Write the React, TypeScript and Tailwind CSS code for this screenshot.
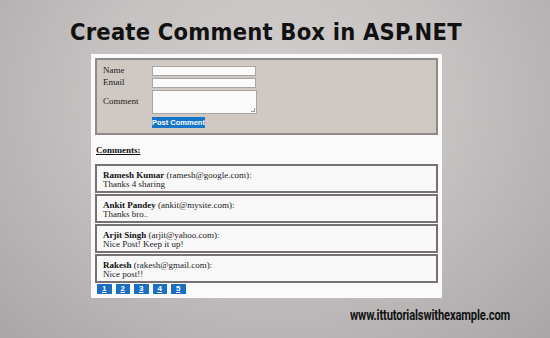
import React from "react";

const comments = [
  { name: "Ramesh Kumar", email: "ramesh@google.com", text: "Thanks 4 sharing" },
  { name: "Ankit Pandey", email: "ankit@mysite.com", text: "Thanks bro.." },
  { name: "Arjit Singh", email: "arjit@yahoo.com", text: "Nice Post! Keep it up!" },
  { name: "Rakesh", email: "rakesh@gmail.com", text: "Nice post!!" },
];

const pages = ["1", "2", "3", "4", "5"];

const App = () => {
  return (
    <div className="w-[550px] h-[338px] overflow-hidden bg-[radial-gradient(ellipse_at_50%_30%,#d2cecd_0%,#c6c2c2_45%,#a9a6a7_100%)]">
      {/* Title */}
      <div className="pl-[70px] pt-[17px] h-[54px]">
        <h1 className="font-['DejaVu_Sans_Condensed','DejaVu_Sans',sans-serif] font-bold text-[23.5px] leading-[30px] text-[#111] tracking-[0.2px]">
          Create Comment Box in ASP.NET
        </h1>
      </div>

      {/* Panel */}
      <div className="ml-[91px] w-[351px] h-[244px] bg-[#fbfafa] px-[4px] pt-[4px] font-['Liberation_Serif',serif] text-[9px] text-[#222]">
        {/* Form */}
        <div className="h-[77px] border-2 border-[#8f8987] bg-[#d0c8c3] pl-[6px] pt-[5px]">
          <div className="flex items-center h-[12px]">
            <span className="w-[49px]">Name</span>
            <div className="w-[104px] h-[10px] bg-[#fbfbfb] border border-[#a9a6a6]" />
          </div>
          <div className="flex items-center h-[12px]">
            <span className="w-[49px]">Email</span>
            <div className="w-[104px] h-[10px] bg-[#fbfbfb] border border-[#a9a6a6]" />
          </div>
          <div className="flex items-center h-[26px]">
            <span className="w-[49px]">Comment</span>
            <div className="relative w-[105px] h-[24px] bg-[#fbfbfb] border border-[#a9a6a6]">
              <span className="absolute right-[1px] bottom-[1px] w-[4px] h-[4px] border-r border-b border-[#999]" />
            </div>
          </div>
          <div className="flex pl-[49px] pt-[2px]">
            <button className="w-[53px] h-[11px] bg-[#1775c8] text-white font-['Liberation_Sans',sans-serif] font-bold text-[7.5px] leading-[11px]">
              Post Comment
            </button>
          </div>
        </div>

        {/* Comments heading */}
        <div className="mt-[9px] h-[14px] pl-[1px] font-bold underline text-[#111]">Comments:</div>

        {/* Comment list */}
        <div className="flex flex-col gap-[1px] mt-[6px]">
          {comments.map((c, i) => (
            <div key={i} className="h-[29px] border-2 border-[#777271] bg-[#f9f8f8] pl-[6px] pt-[5px] leading-[9px]">
              <div>
                <span className="font-bold text-[#111]">{c.name}</span> ({c.email}):
              </div>
              <div>{c.text}</div>
            </div>
          ))}
        </div>

        {/* Pagination */}
        <div className="flex gap-[4px] mt-[1px] pl-[2px]">
          {pages.map((p) => (
            <div
              key={p}
              className="w-[14.5px] h-[10px] bg-[#1a6fc1] text-white font-['Liberation_Sans',sans-serif] font-bold text-[8px] leading-[10px] text-center underline"
            >
              {p}
            </div>
          ))}
        </div>
      </div>

      {/* Website */}
      <div className="pl-[350px] pt-[9px]">
        <div className="origin-left scale-x-[0.8] font-['Roboto',sans-serif] font-bold text-[14px] leading-[16px] text-[#111] whitespace-nowrap tracking-[-0.2px]">
          www.ittutorialswithexample.com
        </div>
      </div>
    </div>
  );
};

export default App;
